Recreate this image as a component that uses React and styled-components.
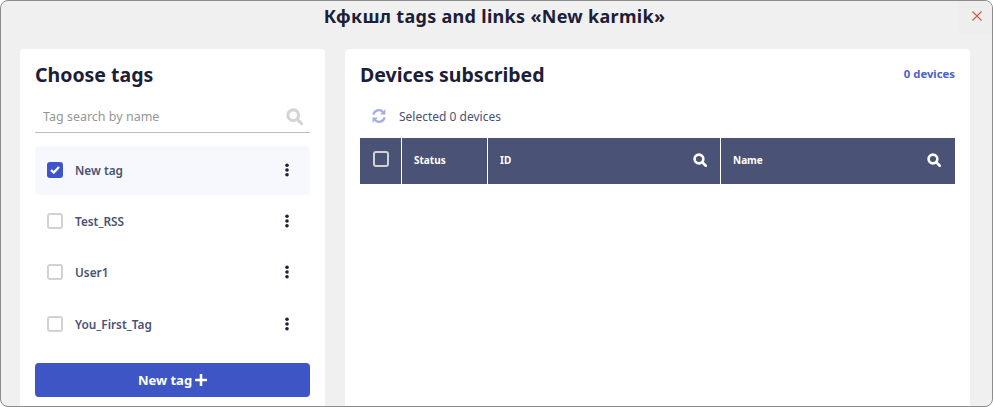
import styled, { createGlobalStyle } from 'styled-components';

const GlobalStyle = createGlobalStyle`
  html, body {
    margin: 0;
    padding: 0;
    background: #fff;
  }
  body {
    font-family: "Noto Sans", "Liberation Sans", sans-serif;
  }
`;

const Modal = styled.div`
  box-sizing: border-box;
  width: 993px;
  height: 407px;
  border: 1px solid #8c8c8c;
  border-radius: 8px;
  background: #f0f0f0;
  overflow: hidden;
  display: flex;
  flex-direction: column;
`;

const Header = styled.div`
  height: 48px;
  flex: none;
  display: flex;
  justify-content: center;
  position: relative;
`;

const Title = styled.h1`
  margin: 3px 0 0 -4px;
  font-size: 18px;
  line-height: 24px;
  font-weight: 700;
  letter-spacing: 0.3px;
  color: #1b2038;
`;

const CloseButton = styled.button`
  position: absolute;
  top: 0;
  right: 0;
  width: 33px;
  height: 34px;
  padding: 0 0 4px 2px;
  border: none;
  background: #eeeeee;
  display: flex;
  align-items: center;
  justify-content: center;
`;

const Body = styled.div`
  flex: 1;
  min-height: 0;
  display: flex;
  gap: 20px;
  padding: 0 22px 0 19px;
`;

const Panel = styled.section`
  box-sizing: border-box;
  width: ${(props) => props.$width}px;
  padding: 14px 15px 0;
  background: #fff;
  border-radius: 4px 4px 0 0;
  display: flex;
  flex-direction: column;
`;

const PanelTitle = styled.h2`
  margin: 0;
  font-size: 19.5px;
  line-height: 24px;
  font-weight: 700;
  color: #1b2038;
`;

const SearchBox = styled.div`
  height: 32px;
  margin-top: 13px;
  padding: 0 7px 0 8px;
  border-bottom: 1px solid #bdbdbd;
  display: flex;
  align-items: center;
  justify-content: space-between;
  font-size: 12.5px;
  color: #969696;
`;

const TagList = styled.ul`
  list-style: none;
  margin: 13px 0 0;
  padding: 0;
`;

const TagRow = styled.li`
  box-sizing: border-box;
  height: 49px;
  margin-bottom: 2.4px;
  padding: 0 21px 2px 12px;
  border-radius: 4px;
  background: ${(props) => (props.$active ? '#f7f8fe' : 'transparent')};
  display: flex;
  align-items: center;
  font-size: 11.8px;
  font-weight: 600;
  color: #4a5275;
`;

const TagName = styled.span`
  flex: 1;
  margin-left: 12px;
`;

const CheckBox = styled.span`
  box-sizing: border-box;
  width: 16px;
  height: 16px;
  flex: none;
  border-radius: 3px;
  border: ${(props) => (props.$checked ? 'none' : '2px solid #d2d2d2')};
  background: ${(props) => (props.$checked ? '#3d55c8' : 'transparent')};
  display: flex;
  align-items: center;
  justify-content: center;
`;

const AddButton = styled.button`
  height: 34px;
  flex: none;
  margin-top: 11px;
  border: none;
  border-radius: 4px;
  background: #3d55c5;
  color: #fff;
  font-family: inherit;
  font-size: 13px;
  font-weight: 700;
  display: flex;
  align-items: center;
  justify-content: center;
  gap: 3px;
`;

const TitleRow = styled.div`
  display: flex;
  align-items: flex-start;
  justify-content: space-between;
`;

const DeviceCount = styled.span`
  margin-top: 3px;
  font-size: 11.3px;
  line-height: 16px;
  font-weight: 700;
  color: #4a62cc;
`;

const SelectedRow = styled.div`
  height: 24px;
  margin-top: 17px;
  padding-left: 12px;
  display: flex;
  align-items: center;
  gap: 13px;
  font-size: 12px;
  color: #4a5275;
`;

const TableHead = styled.div`
  height: 46px;
  margin-top: 10px;
  display: flex;
  gap: 1px;
`;

const HeadCell = styled.div`
  box-sizing: border-box;
  width: ${(props) => props.$width}px;
  padding: 0 ${(props) => props.$padRight || 14}px 3px 12px;
  background: #4a5275;
  color: #fff;
  font-size: 10px;
  font-weight: 700;
  display: flex;
  align-items: center;
  justify-content: space-between;
`;

const CheckCell = styled(HeadCell)`
  padding: 0 0 4px 13px;
  justify-content: flex-start;
`;

const SearchIcon = ({ size, color }) => (
  <svg width={size} height={size} viewBox="0 0 16 16" fill="none" stroke={color} strokeWidth="3">
    <circle cx="6.8" cy="6.8" r="5" />
    <path d="M10.6 10.6 14.6 14.6" strokeLinecap="round" />
  </svg>
);

const DotsIcon = () => (
  <svg width="4" height="14" viewBox="0 0 4 14" fill="#1b2038">
    <circle cx="2" cy="2.2" r="1.8" />
    <circle cx="2" cy="7" r="1.8" />
    <circle cx="2" cy="11.8" r="1.8" />
  </svg>
);

const tags = [
  { name: 'New tag', checked: true },
  { name: 'Test_RSS' },
  { name: 'User1' },
  { name: 'You_First_Tag' },
];

const App = () => {
  return (
    <Modal>
      <GlobalStyle />
      <Header>
        <Title>Кфкшл tags and links «New karmik»</Title>
        <CloseButton type="button" aria-label="Close">
          <svg width="10" height="10" viewBox="0 0 10 10" stroke="#d9553f" strokeWidth="1.1">
            <path d="M.5.5l9 9M9.5.5l-9 9" />
          </svg>
        </CloseButton>
      </Header>
      <Body>
        <Panel $width={305}>
          <PanelTitle>Choose tags</PanelTitle>
          <SearchBox>
            Tag search by name
            <SearchIcon size={17} color="#d4d4d4" />
          </SearchBox>
          <TagList>
            {tags.map((tag) => (
              <TagRow key={tag.name} $active={tag.checked}>
                <CheckBox $checked={tag.checked}>
                  {tag.checked && (
                    <svg width="10" height="8" viewBox="0 0 10 8" fill="none" stroke="#fff" strokeWidth="2.2">
                      <path d="M1 4l2.8 2.6L9 1" />
                    </svg>
                  )}
                </CheckBox>
                <TagName>{tag.name}</TagName>
                <DotsIcon />
              </TagRow>
            ))}
          </TagList>
          <AddButton type="button">
            New tag
            <svg width="12" height="12" viewBox="0 0 12 12" stroke="#fff" strokeWidth="2.6">
              <path d="M6 0v12M0 6h12" />
            </svg>
          </AddButton>
        </Panel>
        <Panel $width={625}>
          <TitleRow>
            <PanelTitle>Devices subscribed</PanelTitle>
            <DeviceCount>0 devices</DeviceCount>
          </TitleRow>
          <SelectedRow>
            <svg width="14" height="14" viewBox="0 0 13 13" fill="none" stroke="#a3aee6" strokeWidth="2">
              <path d="M1.3 5.4A5.2 5.2 0 0 1 10.4 3" />
              <path d="M11.7 7.6A5.2 5.2 0 0 1 2.6 10" />
              <path d="M12 .6v4H8M1 12.4v-4h4" fill="#a3aee6" strokeWidth="1" />
            </svg>
            Selected 0 devices
          </SelectedRow>
          <TableHead>
            <CheckCell $width={41}>
              <CheckBox />
            </CheckCell>
            <HeadCell $width={85}>Status</HeadCell>
            <HeadCell $width={232} $padRight={13}>
              ID
              <SearchIcon size={14} color="#fff" />
            </HeadCell>
            <HeadCell $width={234}>
              Name
              <SearchIcon size={14} color="#fff" />
            </HeadCell>
          </TableHead>
        </Panel>
      </Body>
    </Modal>
  );
};

export default App;
